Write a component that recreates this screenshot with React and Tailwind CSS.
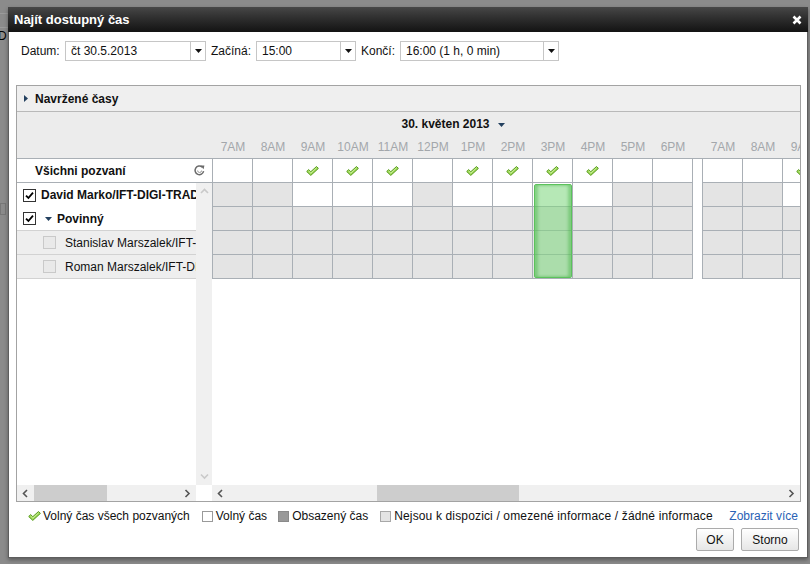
import React from "react";

const LINE = "border-[#a9afb5]";

function GreenCheck({ className = "" }) {
  return (
    <svg width="13" height="10" viewBox="0 0 13 10" className={className}>
      <path
        d="M0.7 5.5 L2.7 3.6 L4.8 5.7 L10.5 0.5 L12.4 2.4 L4.8 9.4 Z"
        fill="#9fd956"
        stroke="#579a1f"
        strokeWidth="1"
        strokeLinejoin="round"
      />
      <path d="M2.7 5.0 L4.8 7.1 L10.5 1.9" fill="none" stroke="#d6f2ad" strokeWidth="0.8" />
    </svg>
  );
}

function Refresh() {
  return (
    <svg width="13" height="13" viewBox="0 0 13 13">
      <path d="M10.6 7.2 A4.3 4.3 0 1 1 9.2 3.1" fill="none" stroke="#6b6b6b" strokeWidth="1.5" />
      <path d="M7.4 1.4 L11.4 1.6 L10.6 5.3 Z" fill="#6b6b6b" />
      <path d="M4.6 6.5 A2 2 0 0 0 8.6 6.5" fill="none" stroke="#9a9a9a" strokeWidth="1" />
    </svg>
  );
}

function Checkbox({ checked, disabled }) {
  if (disabled) {
    return <div className="w-[13px] h-[13px] shrink-0 border border-[#c9c9c9] bg-[#e9e9e9]" />;
  }
  return (
    <div className="w-[13px] h-[13px] shrink-0 border border-[#333] bg-white flex items-center justify-center">
      {checked && (
        <svg width="9" height="9" viewBox="0 0 9 9">
          <path d="M1 4.6 L3.4 7 L8 1.6" fill="none" stroke="#000" strokeWidth="1.8" />
        </svg>
      )}
    </div>
  );
}

function DownTri({ color = "#000", w = 7, h = 4 }) {
  return (
    <svg width={w} height={h} viewBox={`0 0 ${w} ${h}`}>
      <path d={`M0 0 L${w} 0 L${w / 2} ${h} Z`} fill={color} />
    </svg>
  );
}

function Select({ w, value }) {
  return (
    <div className={`flex h-[20px] shrink-0 border border-[#c6c6c6] bg-white ${w}`}>
      <div className="flex-1 flex items-center pl-[5px] text-[12px] text-[#111] whitespace-nowrap overflow-hidden">{value}</div>
      <div className="w-[15px] border-l border-[#c6c6c6] flex items-center justify-center">
        <DownTri color="#111" w={7} h={4} />
      </div>
    </div>
  );
}

function Chev({ dir, color = "#555" }) {
  const d = {
    left: "M5 1 L1.5 4.5 L5 8",
    right: "M1.5 1 L5 4.5 L1.5 8",
    up: "M1 5 L4.5 1.5 L8 5",
    down: "M1 1.5 L4.5 5 L8 1.5",
  }[dir];
  const vert = dir === "up" || dir === "down";
  return (
    <svg width={vert ? 9 : 7} height={vert ? 7 : 9} viewBox={vert ? "0 0 9 7" : "0 0 7 9"}>
      <path d={d} fill="none" stroke={color} strokeWidth="1.6" />
    </svg>
  );
}

const HOURS1 = ["7AM", "8AM", "9AM", "10AM", "11AM", "12PM", "1PM", "2PM", "3PM", "4PM", "5PM", "6PM"];
const HOURS2 = ["7AM", "8AM", "9AM"];
const ALL_CHECKS = [2, 3, 4, 6, 7, 8, 9];

const ROWS = [
  { kind: "all" },
  { gray: [0, 1, 5, 10, 11], next: [true, true, false] },
  { gray: "all", next: [true, true, true] },
  { gray: "all", next: [true, true, true] },
  { gray: "all", next: [true, true, true] },
];

function GridRow({ row }) {
  const isGray = (i) => row.kind !== "all" && (row.gray === "all" || row.gray.includes(i));
  return (
    <div className="flex h-[24px] shrink-0">
      <div className="w-px h-full bg-[#a9afb5] shrink-0" />
      {HOURS1.map((_, i) => (
        <div
          key={i}
          className={`w-[40px] h-full shrink-0 border-r border-b ${LINE} flex items-center justify-center ${isGray(i) ? "bg-[#e4e4e4]" : "bg-white"}`}
        >
          {row.kind === "all" && ALL_CHECKS.includes(i) && <GreenCheck />}
        </div>
      ))}
      <div className={`w-[10px] h-full shrink-0 border-r ${LINE} bg-white`} />
      {HOURS2.map((_, i) => (
        <div
          key={i}
          className={`w-[40px] h-full shrink-0 border-r border-b ${LINE} flex items-center justify-center ${row.kind !== "all" && row.next[i] ? "bg-[#e4e4e4]" : "bg-white"}`}
        >
          {row.kind === "all" && i === 2 && <GreenCheck />}
        </div>
      ))}
    </div>
  );
}

export default function App() {
  return (
    <div className="relative w-[810px] h-[564px] overflow-hidden bg-[#8b8b8b] font-['Liberation_Sans',Arial,sans-serif] text-[12px] text-[#111]">
      {/* page beneath the overlay */}
      <div className="absolute left-0 top-[13px] w-[8px] h-px bg-[#9b9b9b]" />
      <div className="absolute left-0 top-[27px] w-[8px] h-px bg-[#9b9b9b]" />
      <div className="absolute left-0 top-[29px] w-[8px] h-[14px] overflow-hidden">
        <span className="block ml-[-2px] text-[12px] leading-[14px] text-black">D</span>
      </div>
      <div className="absolute left-0 top-[203px] w-[6px] h-[12px] border border-[#777]" />

      {/* dialog window */}
      <div className="absolute left-[8px] top-[7px] w-[800px] h-[551px] flex flex-col shadow-[0_2px_4px_rgba(0,0,0,0.35)]">
        <div className="h-[25px] shrink-0 bg-linear-to-b from-[#474747] to-[#131313] flex items-center justify-between pl-[6px] pr-[6px]">
          <span className="text-[13px] font-bold text-white">Najít dostupný čas</span>
          <svg width="10" height="10" viewBox="0 0 10 10">
            <path d="M1.5 1.5 L8.5 8.5 M8.5 1.5 L1.5 8.5" stroke="#fff" strokeWidth="2.6" />
          </svg>
        </div>

        <div className="flex-1 flex flex-col bg-white border-l border-r border-b border-[#5e5e5e] pl-[7px] pr-[6px]">
          {/* form row */}
          <div className="flex items-center h-[20px] mt-[9px] whitespace-nowrap">
            <span className="ml-[5px] w-[44px] shrink-0">Datum:</span>
            <Select w="w-[141px]" value="čt 30.5.2013" />
            <span className="ml-[5px] w-[45px] shrink-0">Začíná:</span>
            <Select w="w-[100px]" value="15:00" />
            <span className="ml-[5px] w-[39px] shrink-0">Končí:</span>
            <Select w="w-[159px]" value="16:00 (1 h, 0 min)" />
          </div>

          {/* main panel */}
          <div className="mt-[24px] w-[785px] h-[417px] border border-[#a3a3a3] flex flex-col">
            <div className="h-[26px] shrink-0 bg-[#efefef] border-b border-[#b9b9b9] flex items-center pl-[7px]">
              <svg width="4" height="7" viewBox="0 0 4 7">
                <path d="M0 0 L4 3.5 L0 7 Z" fill="#23405f" />
              </svg>
              <span className="ml-[7px] font-bold">Navržené časy</span>
            </div>

            <div className="flex flex-1 min-h-0">
              {/* left column */}
              <div className="w-[195px] shrink-0 flex flex-col">
                <div className={`h-[47px] shrink-0 bg-[#ececec] border-b ${LINE}`} />
                <div className={`h-[24px] shrink-0 border-b ${LINE} bg-white flex items-center justify-between pl-[18px] pr-[6px]`}>
                  <span className="font-bold">Všichni pozvaní</span>
                  <Refresh />
                </div>
                <div className="flex h-[302px] shrink-0">
                  <div className="w-[179px] shrink-0 flex flex-col overflow-hidden">
                    <div className="h-[24px] shrink-0 flex items-center pl-[6px]">
                      <Checkbox checked />
                      <span className="ml-[5px] font-bold whitespace-nowrap">David Marko/IFT-DIGI-TRADE</span>
                    </div>
                    <div className="h-[24px] shrink-0 flex items-center pl-[6px] border-b border-[#d2d2d2]">
                      <Checkbox checked />
                      <span className="ml-[9px] flex items-center">
                        <DownTri color="#23405f" w={7} h={4} />
                      </span>
                      <span className="ml-[5px] font-bold">Povinný</span>
                    </div>
                    <div className="h-[24px] shrink-0 flex items-center pl-[26px] bg-[#eeeeee] border-b border-[#d2d2d2]">
                      <Checkbox disabled />
                      <span className="ml-[9px] whitespace-nowrap">Stanislav Marszalek/IFT-DIGI-TRADE</span>
                    </div>
                    <div className="h-[24px] shrink-0 flex items-center pl-[26px] bg-[#eeeeee] border-b border-[#d2d2d2]">
                      <Checkbox disabled />
                      <span className="ml-[9px] whitespace-nowrap">Roman Marszalek/IFT-DIGI-TRADE</span>
                    </div>
                  </div>
                  <div className="w-[16px] shrink-0 bg-[#f0f0f0] flex flex-col items-center justify-between pt-[5px] pb-[5px]">
                    <Chev dir="up" color="#c9c9c9" />
                    <Chev dir="down" color="#c9c9c9" />
                  </div>
                </div>
                <div className="h-[16px] shrink-0 flex">
                  <div className="w-[179px] shrink-0 bg-[#f0f0f0] flex">
                    <div className="w-[17px] shrink-0 flex items-center justify-center">
                      <Chev dir="left" />
                    </div>
                    <div className="w-[73px] shrink-0 bg-[#cdcdcd]" />
                    <div className="flex-1" />
                    <div className="w-[17px] shrink-0 flex items-center justify-center">
                      <Chev dir="right" />
                    </div>
                  </div>
                  <div className="w-[16px] shrink-0 bg-white" />
                </div>
              </div>

              {/* right column */}
              <div className="flex-1 min-w-0 flex flex-col overflow-hidden">
                <div className={`h-[47px] shrink-0 bg-[#ececec] border-b ${LINE} flex flex-col pl-[1px]`}>
                  <div className="h-[22px] mt-px w-[480px] flex items-center justify-center">
                    <span className="font-bold">30. květen 2013</span>
                    <span className="ml-[8px] flex items-center pt-[2px]">
                      <DownTri color="#23405f" w={7} h={4} />
                    </span>
                  </div>
                  <div className="h-[23px] flex items-center text-[#a3a7ab] whitespace-nowrap">
                    {HOURS1.map((h) => (
                      <div key={h} className="w-[40px] shrink-0 text-center">{h}</div>
                    ))}
                    <div className="w-[10px] shrink-0" />
                    {HOURS2.map((h) => (
                      <div key={h + "2"} className="w-[40px] shrink-0 text-center">{h}</div>
                    ))}
                  </div>
                </div>

                <div className="relative flex-1 min-h-0 flex flex-col bg-white">
                  {ROWS.map((r, i) => (
                    <GridRow key={i} row={r} />
                  ))}
                  <div className="absolute left-[322px] top-[25px] w-[38px] h-[94px] rounded-[2px] border border-[#5cc25c] bg-[rgba(130,215,130,0.58)] shadow-[inset_3px_0_3px_rgba(70,180,70,0.45),inset_-3px_0_3px_rgba(70,180,70,0.45)]" />
                </div>

                <div className="h-[16px] shrink-0 bg-[#f0f0f0] flex">
                  <div className="w-[17px] shrink-0 flex items-center justify-center">
                    <Chev dir="left" />
                  </div>
                  <div className="w-[148px] shrink-0" />
                  <div className="w-[142px] shrink-0 bg-[#cdcdcd]" />
                  <div className="flex-1" />
                  <div className="w-[17px] shrink-0 flex items-center justify-center">
                    <Chev dir="right" />
                  </div>
                </div>
              </div>
            </div>
          </div>

          {/* legend */}
          <div className="flex items-center h-[24px] mt-[2px] pl-[12px] whitespace-nowrap">
            <GreenCheck />
            <span className="ml-[2px]">Volný čas všech pozvaných</span>
            <div className="ml-[12px] w-[11px] h-[11px] border border-[#9a9a9a] bg-white" />
            <span className="ml-[3px]">Volný čas</span>
            <div className="ml-[11px] w-[11px] h-[11px] border border-[#8a8a8a] bg-[#999]" />
            <span className="ml-[3px]">Obsazený čas</span>
            <div className="ml-[12px] w-[11px] h-[11px] border border-[#a8a8a8] bg-[#e4e4e4]" />
            <span className="ml-[3px] tracking-[0.15px]">Nejsou k dispozici / omezené informace / žádné informace</span>
            <span className="ml-auto mr-[3px] text-[#2a62b5]">Zobrazit více</span>
          </div>

          {/* buttons */}
          <div className="flex justify-end gap-[7px] pr-[2px]">
            <button className="w-[38px] h-[23px] border border-[#ababab] rounded-[2px] bg-linear-to-b from-white to-[#e6e6e6] text-[12px] text-[#111]">OK</button>
            <button className="w-[58px] h-[23px] border border-[#ababab] rounded-[2px] bg-linear-to-b from-white to-[#e6e6e6] text-[12px] text-[#111]">Storno</button>
          </div>
        </div>
      </div>
    </div>
  );
}
